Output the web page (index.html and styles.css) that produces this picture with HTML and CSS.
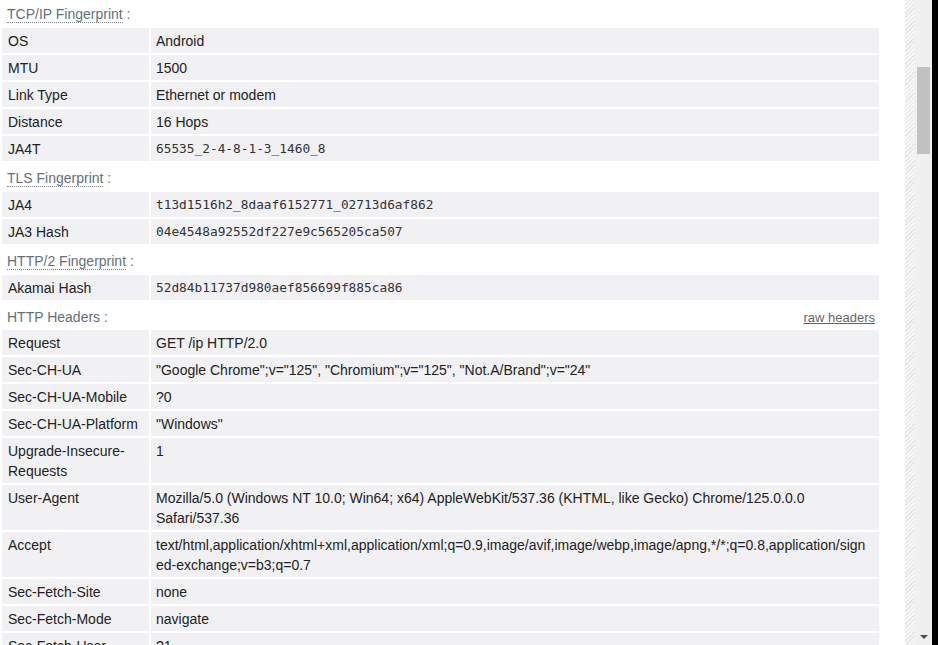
FILE: index.html
```html
<!DOCTYPE html>
<html>
<head>
<meta charset="utf-8">
<link rel="stylesheet" href="styles.css">
</head>
<body>
<div class="frame">
  <div class="main">
    <table class="fp">
      <colgroup><col class="c-label"><col></colgroup>
      <tr class="sec"><th colspan="2"><span class="dot">TCP/IP Fingerprint</span> :</th></tr>
      <tr><td>OS</td><td>Android</td></tr>
      <tr><td>MTU</td><td>1500</td></tr>
      <tr><td>Link Type</td><td>Ethernet or modem</td></tr>
      <tr><td>Distance</td><td>16 Hops</td></tr>
      <tr><td>JA4T</td><td class="mono">65535_2-4-8-1-3_1460_8</td></tr>
      <tr class="sec"><th colspan="2"><span class="dot">TLS Fingerprint</span> :</th></tr>
      <tr><td>JA4</td><td class="mono">t13d1516h2_8daaf6152771_02713d6af862</td></tr>
      <tr><td>JA3 Hash</td><td class="mono">04e4548a92552df227e9c565205ca507</td></tr>
      <tr class="sec"><th colspan="2"><span class="dot">HTTP/2 Fingerprint</span> :</th></tr>
      <tr><td>Akamai Hash</td><td class="mono">52d84b11737d980aef856699f885ca86</td></tr>
      <tr class="sec sec-tight"><th colspan="2"><div class="sec-row"><span>HTTP Headers :</span><a class="raw" href="#">raw headers</a></div></th></tr>
      <tr><td>Request</td><td>GET /ip HTTP/2.0</td></tr>
      <tr><td>Sec-CH-UA</td><td>"Google Chrome";v="125", "Chromium";v="125", "Not.A/Brand";v="24"</td></tr>
      <tr><td>Sec-CH-UA-Mobile</td><td>?0</td></tr>
      <tr><td>Sec-CH-UA-Platform</td><td>"Windows"</td></tr>
      <tr><td>Upgrade-Insecure-Requests</td><td>1</td></tr>
      <tr><td>User-Agent</td><td>Mozilla/5.0 (Windows NT 10.0; Win64; x64) AppleWebKit/537.36 (KHTML, like Gecko) Chrome/125.0.0.0 Safari/537.36</td></tr>
      <tr><td>Accept</td><td>text/html,application/xhtml+xml,application/xml;q=0.9,image/avif,image/webp,image/apng,*/*;q=0.8,application/signed-exchange;v=b3;q=0.7</td></tr>
      <tr><td>Sec-Fetch-Site</td><td>none</td></tr>
      <tr><td>Sec-Fetch-Mode</td><td>navigate</td></tr>
      <tr><td>Sec-Fetch-User</td><td>?1</td></tr>
      <tr><td>Sec-Fetch-Dest</td><td>document</td></tr>
      <tr><td>Accept-Encoding</td><td>gzip, deflate, br, zstd</td></tr>
    </table>
  </div>
  <div class="scroll">
    <div class="hatch"></div>
    <div class="track">
      <div class="thumb"></div>
      <div class="arrow"></div>
    </div>
  </div>
  <div class="edge"></div>
</div>
</body>
</html>
```

FILE: styles.css
```css
html, body {
  margin: 0;
  padding: 0;
  height: 100%;
  overflow: hidden;
  background: #fff;
}

.frame {
  display: flex;
  height: 645px;
  font-family: "Liberation Sans", Arial, sans-serif;
  font-size: 14px;
  color: #222;
}

.main {
  width: 905px;
  flex: none;
  overflow: hidden;
}

.fp {
  width: 881px;
  border-collapse: separate;
  border-spacing: 2px;
  margin-top: -3px;
  table-layout: fixed;
}

.c-label {
  width: 147px;
}

.fp td {
  background: #f1f1f3;
  padding: 3px 5px 2px 6px;
  line-height: 20px;
  vertical-align: top;
  overflow-wrap: anywhere;
}

.fp td + td {
  padding-left: 5px;
  padding-right: 8px;
}

.fp .mono {
  font-family: "DejaVu Sans Mono", "Liberation Mono", monospace;
  font-size: 12.8px;
  color: #333;
}

.sec th {
  text-align: left;
  font-weight: normal;
  color: #66707a;
  padding: 5px 4px 2px 5px;
  line-height: 20px;
  height: 20px;
}

.sec-tight th {
  padding-top: 6px;
  padding-bottom: 1px;
  height: 19px;
}

.dot {
  border-bottom: 1px dotted #7a838c;
}

.sec-row {
  display: flex;
  justify-content: space-between;
  align-items: center;
  height: 19px;
  line-height: 19px;
}

.raw {
  font-size: 13px;
  line-height: 19px;
  color: #666;
  text-decoration: underline;
}

.scroll {
  display: flex;
  width: 27px;
  flex: none;
}

.hatch {
  width: 10px;
  background: repeating-linear-gradient(135deg, #e6e6e6 0 1px, #f6f6f6 1px 3px);
}

.track {
  width: 17px;
  background: #f0f0f0;
  position: relative;
}

.thumb {
  position: absolute;
  left: 2px;
  top: 67px;
  width: 13px;
  height: 87px;
  background: #c1c1c1;
}

.arrow {
  position: absolute;
  left: 5px;
  top: 635px;
  width: 0;
  height: 0;
  border-left: 4px solid transparent;
  border-right: 4px solid transparent;
  border-top: 4px solid #505050;
}

.edge {
  flex: 1;
  background: #000;
}
```
